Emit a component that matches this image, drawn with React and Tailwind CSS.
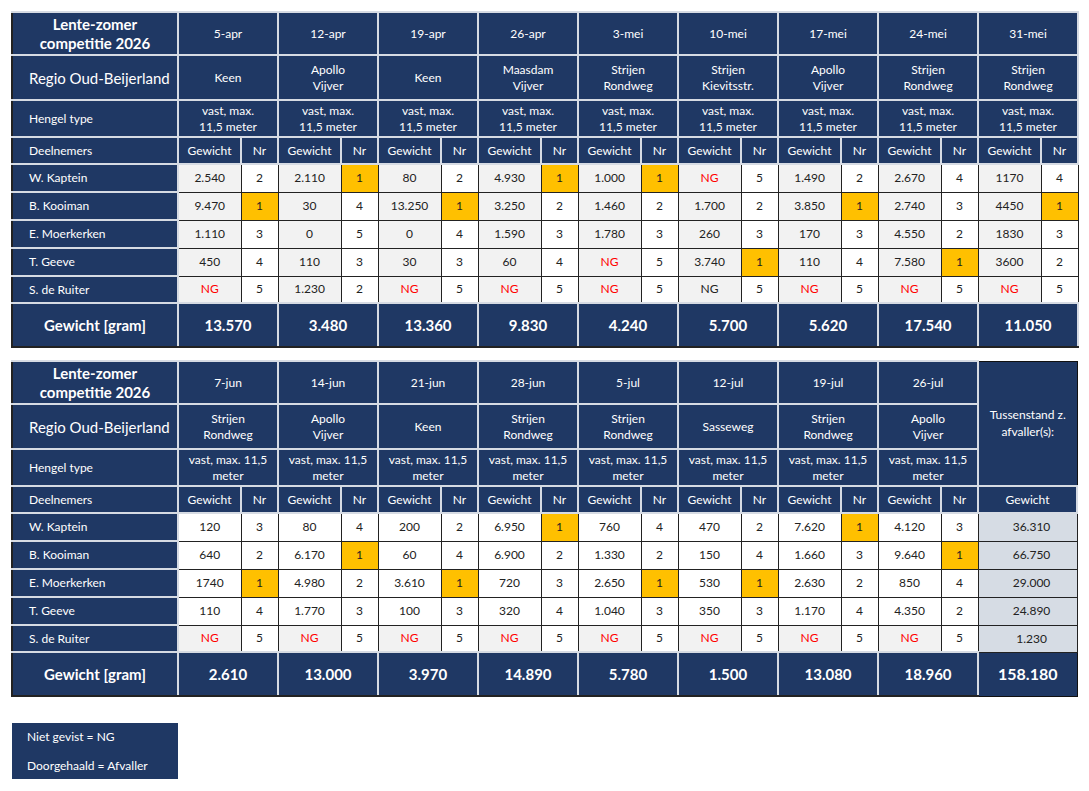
import React from 'react';

const players = ['W. Kaptein', 'B. Kooiman', 'E. Moerkerken', 'T. Geeve', 'S. de Ruiter'];

const spring = {
  events: [
    { date: '5-apr', place: ['Keen'] },
    { date: '12-apr', place: ['Apollo', 'Vijver'] },
    { date: '19-apr', place: ['Keen'] },
    { date: '26-apr', place: ['Maasdam', 'Vijver'] },
    { date: '3-mei', place: ['Strijen', 'Rondweg'] },
    { date: '10-mei', place: ['Strijen', 'Kievitsstr.'] },
    { date: '17-mei', place: ['Apollo', 'Vijver'] },
    { date: '24-mei', place: ['Strijen', 'Rondweg'] },
    { date: '31-mei', place: ['Strijen', 'Rondweg'] },
  ],
  rows: [
    [['2.540', 2], ['2.110', 1], ['80', 2], ['4.930', 1], ['1.000', 1], ['NG', 5], ['1.490', 2], ['2.670', 4], ['1170', 4]],
    [['9.470', 1], ['30', 4], ['13.250', 1], ['3.250', 2], ['1.460', 2], ['1.700', 2], ['3.850', 1], ['2.740', 3], ['4450', 1]],
    [['1.110', 3], ['0', 5], ['0', 4], ['1.590', 3], ['1.780', 3], ['260', 3], ['170', 3], ['4.550', 2], ['1830', 3]],
    [['450', 4], ['110', 3], ['30', 3], ['60', 4], ['NG', 5], ['3.740', 1], ['110', 4], ['7.580', 1], ['3600', 2]],
    [['NG', 5], ['1.230', 2], ['NG', 5], ['NG', 5], ['NG', 5], ['NG*', 5], ['NG', 5], ['NG', 5], ['NG', 5]],
  ],
  totals: ['13.570', '3.480', '13.360', '9.830', '4.240', '5.700', '5.620', '17.540', '11.050'],
  rod: ['vast, max.', '11,5 meter'],
};

const summer = {
  events: [
    { date: '7-jun', place: ['Strijen', 'Rondweg'] },
    { date: '14-jun', place: ['Apollo', 'Vijver'] },
    { date: '21-jun', place: ['Keen'] },
    { date: '28-jun', place: ['Strijen', 'Rondweg'] },
    { date: '5-jul', place: ['Strijen', 'Rondweg'] },
    { date: '12-jul', place: ['Sasseweg'] },
    { date: '19-jul', place: ['Strijen', 'Rondweg'] },
    { date: '26-jul', place: ['Apollo', 'Vijver'] },
  ],
  rows: [
    [['120', 3], ['80', 4], ['200', 2], ['6.950', 1], ['760', 4], ['470', 2], ['7.620', 1], ['4.120', 3]],
    [['640', 2], ['6.170', 1], ['60', 4], ['6.900', 2], ['1.330', 2], ['150', 4], ['1.660', 3], ['9.640', 1]],
    [['1740', 1], ['4.980', 2], ['3.610', 1], ['720', 3], ['2.650', 1], ['530', 1], ['2.630', 2], ['850', 4]],
    [['110', 4], ['1.770', 3], ['100', 3], ['320', 4], ['1.040', 3], ['350', 3], ['1.170', 4], ['4.350', 2]],
    [['NG', 5], ['NG', 5], ['NG', 5], ['NG', 5], ['NG', 5], ['NG', 5], ['NG', 5], ['NG', 5]],
  ],
  standing: ['36.310', '66.750', '29.000', '24.890', '1.230'],
  totals: ['2.610', '13.000', '3.970', '14.890', '5.780', '1.500', '13.080', '18.960'],
  grandTotal: '158.180',
  rod: ['vast, max. 11,5', 'meter'],
};

const head = 'bg-[#1f3864] text-white border-2 border-[#d6dbe3] text-center align-middle';
const nameCell = 'bg-[#1f3864] text-white border-2 border-[#d6dbe3] text-left pl-4 align-middle whitespace-nowrap';

function Lines({ lines }) {
  return lines.map((l, i) => (
    <React.Fragment key={i}>
      {i > 0 && <br />}
      {l}
    </React.Fragment>
  ));
}

function Competition({ data, grayWeights, withStanding }) {
  const { events } = data;
  return (
    <table className={`table-fixed border-collapse text-[12px] leading-[16px] ${withStanding ? 'w-[1065px]' : 'w-[1066px]'}`}>
      <colgroup>
        <col className="w-[166px]" />
        {events.map((e) => (
          <React.Fragment key={e.date}>
            <col className="w-[63px]" />
            <col className="w-[37px]" />
          </React.Fragment>
        ))}
        {withStanding && <col className="w-[99px]" />}
      </colgroup>
      <tbody>
        <tr className="h-[43px]">
          <td className={`${head} text-[15px] font-bold leading-[19px] border-l-[#222]`}>
            Lente-zomer
            <br />
            competitie 2026
          </td>
          {events.map((e) => (
            <td key={e.date} colSpan={2} className={head}>
              {e.date}
            </td>
          ))}
          {withStanding && (
            <td rowSpan={3} className="bg-[#1f3864] text-white border border-[#111] text-center align-middle leading-[17px]">
              Tussenstand z.
              <br />
              afvaller(s):
            </td>
          )}
        </tr>
        <tr className="h-[45px]">
          <td className={`${nameCell} text-[15px] border-l-[#222]`}>Regio Oud-Beijerland</td>
          {events.map((e) => (
            <td key={e.date} colSpan={2} className={head}>
              <Lines lines={e.place} />
            </td>
          ))}
        </tr>
        <tr className="h-[37px]">
          <td className={`${nameCell} border-l-[#222]`}>Hengel type</td>
          {events.map((e) => (
            <td key={e.date} colSpan={2} className={head}>
              <Lines lines={data.rod} />
            </td>
          ))}
        </tr>
        <tr className="h-[27px]">
          <td className={`${nameCell} border-l-[#222]`}>Deelnemers</td>
          {events.map((e) => (
            <React.Fragment key={e.date}>
              <td className={head}>Gewicht</td>
              <td className={head}>Nr</td>
            </React.Fragment>
          ))}
          {withStanding && <td className={head}>Gewicht</td>}
        </tr>
        {players.map((p, r) => (
          <tr key={p} className={r === 4 ? 'h-[27px]' : 'h-[28px]'}>
            <td className={`${nameCell} border-l-[#222]`}>{p}</td>
            {data.rows[r].map(([w, nr], c) => {
              const ng = w.startsWith('NG');
              const gray = grayWeights || ng;
              return (
                <React.Fragment key={c}>
                  <td
                    className={`border border-[#222] text-center align-middle ${gray ? 'bg-[#f2f2f2]' : 'bg-white'} ${
                      w === 'NG' ? 'text-[#ff0000]' : 'text-[#222]'
                    }`}
                  >
                    {ng ? 'NG' : w}
                  </td>
                  <td className={`border border-[#222] text-center align-middle text-[#222] ${nr === 1 ? 'bg-[#ffc000]' : 'bg-white'}`}>
                    {nr}
                  </td>
                </React.Fragment>
              );
            })}
            {withStanding && (
              <td className="border border-[#222] bg-[#d6dce4] text-center align-middle pl-2 text-[#222]">{data.standing[r]}</td>
            )}
          </tr>
        ))}
        <tr className="h-[44px]">
          <td className={`${head} text-[15px] font-bold border-l-[#222] border-b-[#222]`}>Gewicht [gram]</td>
          {data.totals.map((t, i) => (
            <td key={i} colSpan={2} className={`${head} text-[15px] font-bold border-b-[#222]`}>
              {t}
            </td>
          ))}
          {withStanding && (
            <td className="bg-[#1f3864] text-white border border-[#111] text-center align-middle text-[16px] font-bold">
              {data.grandTotal}
            </td>
          )}
        </tr>
      </tbody>
    </table>
  );
}

export default function App() {
  return (
    <div className="w-[1089px] h-[791px] bg-white pl-[11px] pt-[11px]" style={{ fontFamily: 'Lato, "Open Sans", sans-serif' }}>
      <Competition data={spring} grayWeights />
      <div className="h-[12px]" />
      <Competition data={summer} withStanding />
      <div className="mt-[26px] ml-[1px] w-[166px] h-[56px] bg-[#1f3864] text-white text-[12px] flex flex-col justify-center gap-[11px] pl-[15px]">
        <span>Niet gevist = NG</span>
        <span>Doorgehaald = Afvaller</span>
      </div>
    </div>
  );
}
